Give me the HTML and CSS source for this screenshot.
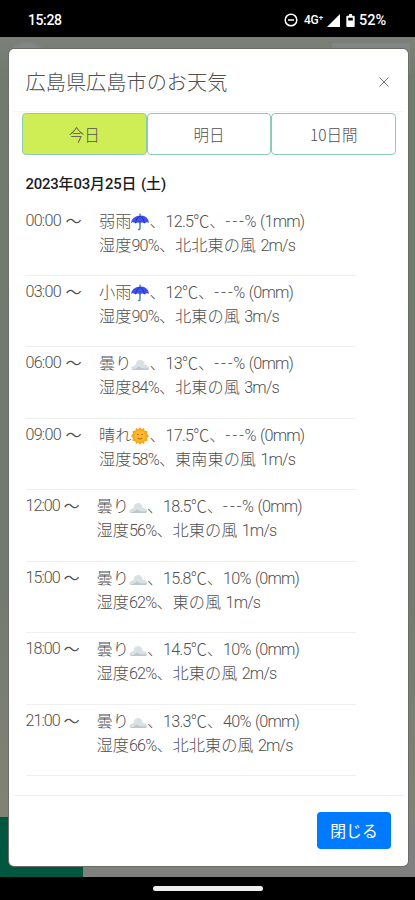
FILE: index.html
```
<!DOCTYPE html>
<html lang="ja">
<head>
<meta charset="utf-8">
<title>広島県広島市のお天気</title>
<link rel="stylesheet" href="styles.css">
</head>
<body>
<svg class="defs" aria-hidden="true">
  <symbol id="rain" viewBox="0 0 18 18">
    <path d="M9 8v7q0 2-2 1.500" fill="none" stroke="#4f8a8b" stroke-width="1.500"/>
    <path d="M0 10Q1 3 9 2.500t9 7.500q-2-1.500-4.500.5Q11 8.500 9 10.500 7 8.500 4.500 10.500 2 8.500 0 10z" fill="#3f51ea"/>
    <path d="M9 .5v2M4.500 10Q5 5 9 3q4 2 4.500 7" fill="none" stroke="#2436b8"/>
  </symbol>
  <symbol id="cloud" viewBox="0 0 18 18">
    <path d="M1 14.500q-2-2 1-3.500 1-.7 2.500-.7Q5 5 9.500 5q3.500 0 4 4.500Q18 10.500 18 13q0 2-3 2H3q-1.500 0-2-.5z" fill="#d9e1e4"/>
    <path d="M1 14.500q4-.5 7-3 3 3 10 1.500 0 2-3 2H3q-1.500 0-2-.5z" fill="#bac8cd"/>
  </symbol>
  <symbol id="sun" viewBox="0 0 18 18">
    <path d="M9 0l1.700 2.200L13 1l.7 2.700 2.800.2-.4 2.800L18 9l-1.900 2.300.4 2.800-2.800.2L13 17l-2.300-1.200L9 18l-1.700-2.200L5 17l-.7-2.700-2.800-.2.4-2.800L0 9l1.900-2.300-.4-2.800 2.800-.2L5 1l2.300 1.200z" fill="#f9a81c"/>
    <circle cx="9" cy="9" r="5.500" fill="#ffb92e"/>
    <path d="M6 7.500h1.500M10.500 7.500H12M6.500 11q2.500 2 5 0" fill="none" stroke="#bd6910" stroke-width="1.100"/>
  </symbol>
</svg>
<div class="screen">
  <header class="status">
    <span class="clock">15:28</span>
    <svg class="dnd" viewBox="0 0 14 14"><circle cx="7" cy="7" r="5.800"/><path d="M4 7h6"/></svg>
    <span class="net">4G⁺</span>
    <svg class="signal" viewBox="0 0 13 13"><path d="M0 13L13 0v13z"/></svg>
    <svg class="battery" viewBox="0 0 9 14"><path fill-rule="evenodd" d="M3 0h3v2h2q1 0 1 1v10q0 1-1 1H1q-1 0-1-1V3q0-1 1-1h2zM2 4v3h5V4z"/></svg>
    <span class="percent">52%</span>
  </header>
  <main class="backdrop">
    <section class="modal">
      <div class="head"><h1>広島県広島市のお天気</h1><svg class="close" viewBox="0 0 10 10"><path d="M.5.5l9 9M9.500.5l-9 9"/></svg></div>
      <nav class="tabs"><span class="tab active">今日</span><span class="tab">明日</span><span class="tab">10日間</span></nav>
      <div class="body">
        <h2><i>2023</i>年<i>03</i>月<i>25</i>日<i> (</i>土<i>)</i></h2>
        <div class="row"><div class="time"><i>00:00</i><b>〜</b></div><div class="detail"><p>弱雨<svg><use href="#rain"/></svg>、<i>12.5</i>℃、<i><u>---</u>% (1mm)</i></p><p>湿度<i>90%</i>、北北東の風<i> 2m/s</i></p></div></div>
        <div class="row"><div class="time"><i>03:00</i><b>〜</b></div><div class="detail"><p>小雨<svg><use href="#rain"/></svg>、<i>12</i>℃、<i><u>---</u>% (0mm)</i></p><p>湿度<i>90%</i>、北東の風<i> 3m/s</i></p></div></div>
        <div class="row"><div class="time"><i>06:00</i><b>〜</b></div><div class="detail"><p>曇り<svg><use href="#cloud"/></svg>、<i>13</i>℃、<i><u>---</u>% (0mm)</i></p><p>湿度<i>84%</i>、北東の風<i> 3m/s</i></p></div></div>
        <div class="row"><div class="time"><i>09:00</i><b>〜</b></div><div class="detail"><p>晴れ<svg><use href="#sun"/></svg>、<i>17.5</i>℃、<i><u>---</u>% (0mm)</i></p><p>湿度<i>58%</i>、東南東の風<i> 1m/s</i></p></div></div>
        <div class="row late"><div class="time"><i>12:00</i><b>〜</b></div><div class="detail"><p>曇り<svg><use href="#cloud"/></svg>、<i>18.5</i>℃、<i><u>---</u>% (0mm)</i></p><p>湿度<i>56%</i>、北東の風<i> 1m/s</i></p></div></div>
        <div class="row late"><div class="time"><i>15:00</i><b>〜</b></div><div class="detail"><p>曇り<svg><use href="#cloud"/></svg>、<i>15.8</i>℃、<i>10% (0mm)</i></p><p>湿度<i>62%</i>、東の風<i> 1m/s</i></p></div></div>
        <div class="row late"><div class="time"><i>18:00</i><b>〜</b></div><div class="detail"><p>曇り<svg><use href="#cloud"/></svg>、<i>14.5</i>℃、<i>10% (0mm)</i></p><p>湿度<i>62%</i>、北東の風<i> 2m/s</i></p></div></div>
        <div class="row late"><div class="time"><i>21:00</i><b>〜</b></div><div class="detail"><p>曇り<svg><use href="#cloud"/></svg>、<i>13.3</i>℃、<i>40% (0mm)</i></p><p>湿度<i>66%</i>、北北東の風<i> 2m/s</i></p></div></div>
      </div>
      <footer class="foot"><button>閉じる</button></footer>
    </section>
  </main>
  <div class="navbar"><span></span></div>
</div>
</body>
</html>
```
FILE: styles.css
```
* { box-sizing: border-box; }
body { margin: 0; background: #000; font-family: "Noto Sans CJK JP", sans-serif; font-weight: 300; color: #505050; }
h1, h2, p { margin: 0; }
i { font-family: Roboto, sans-serif; font-style: normal; font-weight: 300; letter-spacing: -0.8px; word-spacing: 1.200px; white-space: pre; }
u { text-decoration: none; letter-spacing: 2.200px; margin-right: -1.500px; }
.defs { position: absolute; width: 0; height: 0; }
.screen { width: 415px; height: 900px; display: flex; flex-direction: column; overflow: hidden; }
.status { height: 37px; flex: none; display: flex; align-items: center; padding: 3px 28px 0; color: #fff; font: 500 14px Roboto, sans-serif; }
.status svg { fill: #fff; flex: none; }
.clock { margin-right: auto; letter-spacing: -0.4px; }
.status .dnd { width: 14px; height: 14px; fill: none; stroke: #fff; stroke-width: 1.500; margin-right: 6px; }
.net { width: 21px; font-size: 12px; letter-spacing: -0.3px; margin-right: 2px; white-space: nowrap; }
.signal { width: 13px; height: 13px; margin-right: 6px; }
.battery { width: 9px; height: 13px; margin-right: 4px; }
.percent { width: 28px; font-size: 14.500px; letter-spacing: 0; }
.backdrop {
  height: 840px; flex: none; padding: 12px 7px 0 9px;
  background:
    radial-gradient(ellipse at center, #838588 50%, transparent 80%) 12px 5px / 30px 16px no-repeat,
    linear-gradient(#828486, #828486) 332px 6px / 78px 30px no-repeat,
    linear-gradient(90deg, #00573f 83px, #808080 83px) 0 780px / 100% 60px no-repeat,
    linear-gradient(#7c8078, #72796d 40px, #74796f 550px, #858576);
}
.modal { height: 817px; display: flex; flex-direction: column; background: #fff; border-radius: 5px; box-shadow: 0 0 0 1px #686d65; }
.head { height: 63px; flex: none; margin: 0 4px; padding: 3px 15px 0 12.500px; display: flex; align-items: center; justify-content: space-between; border-bottom: 1px solid #f4f6f6; }
h1 { font-size: 20.200px; font-weight: 300; line-height: 30px; }
.close { width: 10px; height: 10px; fill: none; stroke: #777; }
.tabs { height: 42px; flex: none; display: flex; margin: 1px 12px 0 13px; }
.tab { flex: 1; display: flex; align-items: center; justify-content: center; border: 1px solid #8bcbb4; border-radius: 4px; font-size: 15.500px; }
.active { background: #cfee55; }
.body { flex: none; padding: 16px 52px 0 16.500px; }
h2 { height: 24px; font-size: 14.900px; line-height: 24px; font-weight: 500; color: #1c1c1c; white-space: nowrap; }
h2 i { font-weight: 500; letter-spacing: -0.200px; }
.row { height: 71.430px; display: flex; padding-top: 3px; border-bottom: 1px solid #eee; font-size: 16.200px; line-height: 24px; white-space: nowrap; }
h2 + .row { height: 81px; padding-top: 12.600px; }
.time { width: 73.500px; flex: none; display: flex; }
.time i { width: 40px; padding-top: 1px; }
.time b { font-weight: 400; }
.late .time { width: 71px; }
.late .time i { width: 38px; letter-spacing: -1px; }
.detail p { height: 24px; }
.detail svg { width: 18px; height: 18px; vertical-align: -4px; }
.foot { margin: auto 4px 0; height: 71px; flex: none; border-top: 1px solid #f0f0f0; padding: 16px 13px 0; display: flex; justify-content: flex-end; align-items: flex-start; }
button { width: 74px; height: 37px; padding: 0; border: 0; border-radius: 4px; background: #007bff; color: #fff; font: 400 15.800px "Noto Sans CJK JP", sans-serif; }
.navbar { height: 23px; flex: none; display: flex; justify-content: center; align-items: center; }
.navbar span { width: 110px; height: 5px; border-radius: 3px; background: #eee; }
```
